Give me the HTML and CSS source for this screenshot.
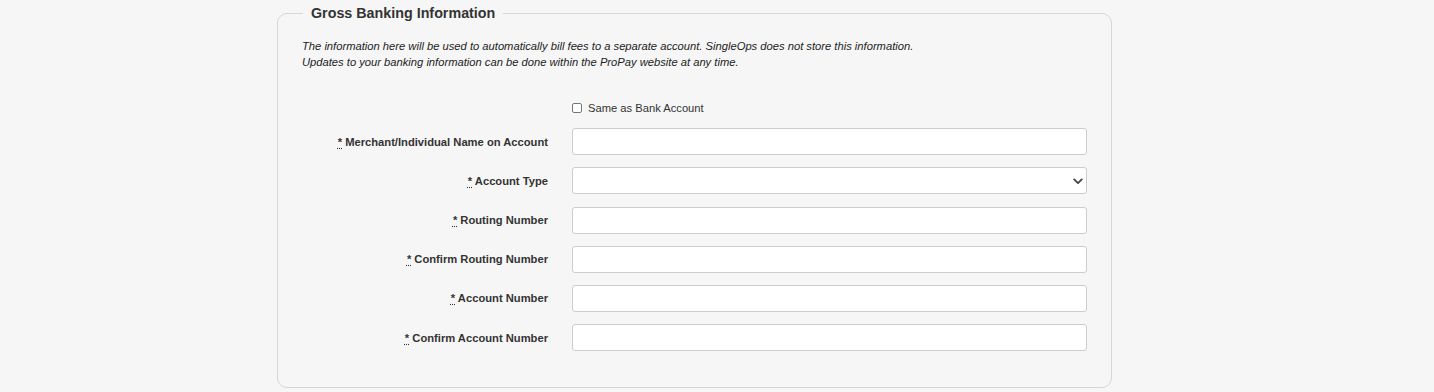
FILE: index.html
```html
<!DOCTYPE html>
<html lang="en">
<head>
<meta charset="utf-8">
<title>Gross Banking Information</title>
<link rel="stylesheet" href="styles.css">
</head>
<body>
<div class="page">
  <fieldset class="panel">
    <legend class="panel-title">Gross Banking Information</legend>
    <p class="note">The information here will be used to automatically bill fees to a separate account. SingleOps does not store this information.<br>Updates to your banking information can be done within the ProPay website at any time.</p>
    <div class="form">
      <div class="spacer"></div>
      <label class="check"><input type="checkbox" class="check-box"><span>Same as Bank Account</span></label>

      <label class="label"><abbr title="required">*</abbr> Merchant/Individual Name on Account</label>
      <input class="field" type="text">

      <label class="label"><abbr title="required">*</abbr> Account Type</label>
      <div class="select-wrap">
        <select class="field select"><option></option></select>
        <svg class="chevron" width="10" height="7" viewBox="0 0 10 7"><path d="M1.2 1.4 L5 5.2 L8.8 1.4" fill="none" stroke="#444" stroke-width="1.8" stroke-linecap="round" stroke-linejoin="round"/></svg>
      </div>

      <label class="label"><abbr title="required">*</abbr> Routing Number</label>
      <input class="field" type="text">

      <label class="label"><abbr title="required">*</abbr> Confirm Routing Number</label>
      <input class="field" type="text">

      <label class="label"><abbr title="required">*</abbr> Account Number</label>
      <input class="field" type="text">

      <label class="label"><abbr title="required">*</abbr> Confirm Account Number</label>
      <input class="field" type="text">
    </div>
  </fieldset>
</div>
</body>
</html>
```

FILE: styles.css
```css
html, body {
  margin: 0;
  padding: 0;
  background: #f6f6f6;
}
body {
  font-family: "Liberation Sans", Arial, sans-serif;
  color: #333;
  height: 392px;
  overflow: hidden;
}
.page {
  padding-left: 277px;
  width: 835px;
}
.panel {
  margin: 4px 0 0 0;
  padding: 0 24px 36px 24px;
  border: 1px solid #d6d6d6;
  border-radius: 10px;
  min-width: 0;
}
.panel-title {
  margin-left: 1px;
  padding: 0 8px;
  font-size: 14.3px;
  line-height: 18px;
  font-weight: bold;
  color: #333;
}
.note {
  margin: 16px 0 0 0;
  font-size: 11.2px;
  line-height: 16px;
  font-style: italic;
  color: #222;
}
.form {
  margin-top: 30px;
  display: grid;
  grid-template-columns: 246px 1fr;
  column-gap: 24px;
  row-gap: 12.2px;
  align-items: center;
}
.check {
  display: flex;
  align-items: center;
  gap: 6px;
  height: 16px;
  font-size: 11.2px;
  color: #333;
}
.check-box {
  appearance: none;
  -webkit-appearance: none;
  margin: 0;
  width: 10px;
  height: 10px;
  border: 1px solid #777;
  border-radius: 2px;
  background: #fff;
}
.label {
  text-align: right;
  font-size: 11.2px;
  font-weight: bold;
  color: #333;
  line-height: 14px;
}
.label abbr {
  text-decoration: underline dotted;
  text-underline-offset: 2px;
  cursor: help;
}
.field {
  box-sizing: border-box;
  display: block;
  width: 100%;
  height: 27px;
  margin: 0;
  padding: 0 8px;
  border: 1px solid #cdcdcd;
  border-radius: 3px;
  background: #fff;
  font-family: inherit;
  font-size: 12px;
  outline: none;
}
.select-wrap {
  position: relative;
}
.select {
  appearance: none;
  -webkit-appearance: none;
}
.chevron {
  position: absolute;
  right: 4px;
  top: 11px;
  pointer-events: none;
}
```
